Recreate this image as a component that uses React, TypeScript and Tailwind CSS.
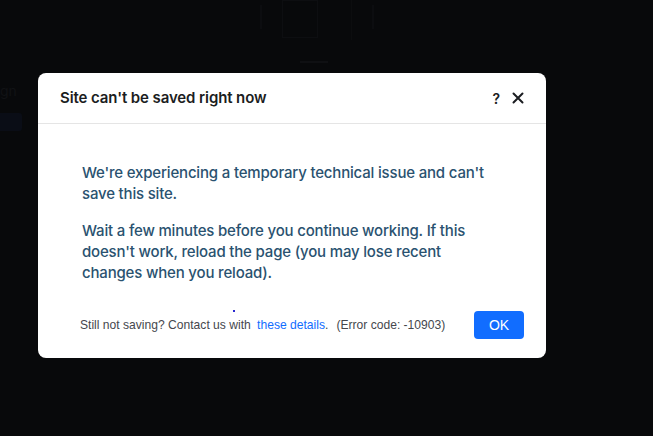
import React from "react";

export default function App() {
  return (
    <div className="relative w-[653px] h-[436px] overflow-hidden bg-[#08090b] font-['Inter',sans-serif]">
      {/* faint editor behind the overlay */}
      <div className="absolute left-[260px] top-0 flex items-start gap-[20px] opacity-40">
        <div className="mt-[5px] w-[2px] h-[24px] bg-[#141518]" />
        <div className="w-[36px] h-[38px] border border-[#15161a]" />
        <div className="w-[14px] h-[40px] border-r border-[#121316]" />
        <div className="mt-[5px] w-[2px] h-[24px] bg-[#141518]" />
      </div>
      <div className="absolute left-[300px] top-[61px] w-[28px] h-[2px] bg-[#0f1013]" />
      <div className="absolute left-0 top-[80px] text-[14px] text-[#111215]">gn</div>
      <div className="absolute left-0 top-[113px] w-[22px] h-[18px] rounded-r-[3px] bg-[#0a0d16]" />

      <div className="pt-[73px] pl-[38px]">
        <div className="relative w-[508px] h-[285px] rounded-[8px] bg-white flex flex-col">
          <div className="h-[51px] border-b border-[#e5e5e5] flex items-center justify-between pl-[22px] pr-[22px]">
            <span className="text-[15px] font-semibold text-[#1b1d21] tracking-[-0.1px]">
              Site can't be saved right now
            </span>
            <div className="flex items-center gap-[12px] text-[#1b1d21]">
              <span className="text-[14px] font-semibold">?</span>
              <svg width="12" height="12" viewBox="0 0 12 12" fill="none" stroke="#1b1d21" strokeWidth="2" strokeLinecap="round">
                <path d="M1.5 1.5 L10.5 10.5 M10.5 1.5 L1.5 10.5" />
              </svg>
            </div>
          </div>

          <div className="pl-[44px] pr-[52px] pt-[38px] text-[15px] leading-[21px] font-medium tracking-[-0.18px] text-[#2a5270]">
            <p>We're experiencing a temporary technical issue and can't save this site.</p>
            <p className="mt-[16px]">
              Wait a few minutes before you continue working. If this doesn't work, reload the page (you may lose recent changes when you reload).
            </p>
          </div>

          <span className="absolute left-[195px] top-[237px] w-[2px] h-[2px] bg-[#2a2ad0]" />

          <div className="mt-auto pb-[19px] pl-[42px] pr-[22px] flex items-center justify-between">
            <p className="font-['Liberation_Sans',sans-serif] text-[12.1px] text-[#45474d]">
              Still not saving? Contact us with <span className="text-[#116dff] ml-[3px]">these details</span>.
              <span className="ml-[8px]">(Error code: -10903)</span>
            </p>
            <button className="w-[50px] h-[28px] rounded-[4px] bg-[#116dff] text-white text-[14px] font-['Liberation_Sans',sans-serif]">
              OK
            </button>
          </div>
        </div>
      </div>
    </div>
  );
}
